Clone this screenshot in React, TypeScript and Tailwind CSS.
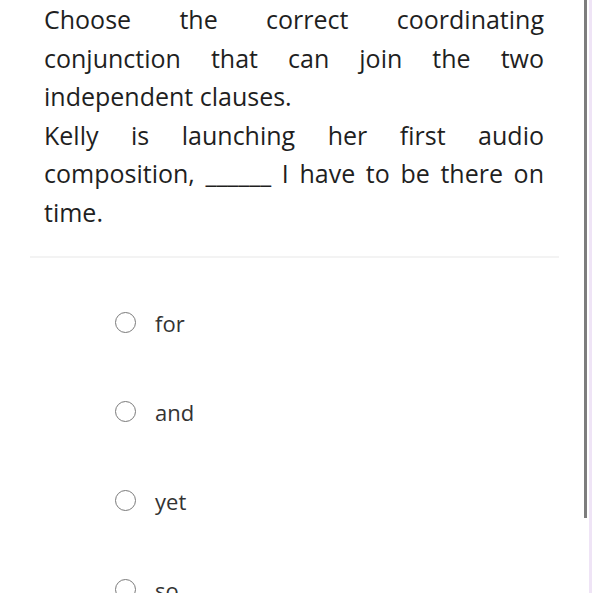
const OPTIONS = ['for', 'and', 'yet', 'so']

function Radio() {
  return (
    <span className="block h-[21px] w-[21px] shrink-0 rounded-full border-[1.5px] border-[#7a7a7a] bg-white" />
  )
}

export default function App() {
  return (
    <div
      className="flex h-[593px] w-[592px] overflow-hidden bg-white text-[#1f1f1f]"
      style={{ fontFamily: '"Open Sans", "Noto Sans", sans-serif' }}
    >
      <main className="w-[584px] shrink-0">
        {/* Вопрос */}
        <div className="pl-[44px] pr-[40px] text-[25px] leading-[38.5px] text-justify">
          <p>Choose the correct coordinating conjunction that can join the two independent clauses.</p>
          <p>Kelly is launching her first audio composition, ______ I have to be there on time.</p>
        </div>

        <div className="ml-[30px] mr-[25px] mt-[25px] h-[2px] bg-[#f3f3f3]" />

        {/* Варианты */}
        <div className="mt-[20px] pl-[115px]">
          {OPTIONS.map((o) => (
            <label key={o} className="flex h-[89px] items-center gap-[19px]">
              <Radio />
              <span className="text-[22px] leading-none text-[#333]">{o}</span>
            </label>
          ))}
        </div>
      </main>

      {/* Скроллбар */}
      <div className="flex w-[8px] shrink-0">
        <div className="h-[518px] w-[3px] bg-[#7d7d7d]" />
        <div className="w-[2px]" />
        <div className="h-full w-[3px] bg-[#efe4f6]" />
      </div>
    </div>
  )
}
